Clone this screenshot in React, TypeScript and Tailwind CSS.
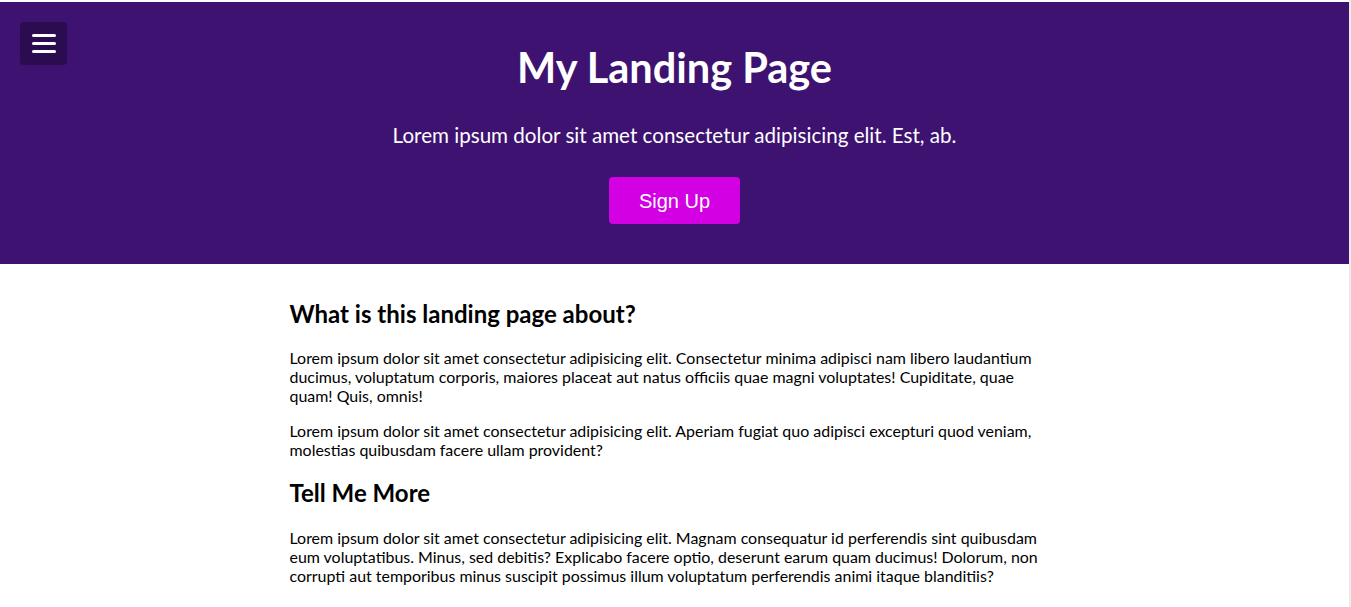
import React from "react";

export default function App() {
  return (
    <div className="flex h-[607px] w-full overflow-hidden bg-white" style={{ fontFamily: "Lato, 'Noto Sans', sans-serif" }}>
      <div className="flex-1 pt-[2px]">
        <header className="relative h-[262px] bg-[#3e1270] text-center text-white">
          <button className="absolute left-[20px] top-[20px] flex h-[43px] w-[47px] flex-col items-center justify-center gap-[5px] rounded-[4px] bg-[#2b0c50]">
            <span className="block h-[3px] w-[24px] rounded-full bg-white" />
            <span className="block h-[3px] w-[24px] rounded-full bg-white" />
            <span className="block h-[3px] w-[24px] rounded-full bg-white" />
          </button>
          <h1 className="pt-[40px] text-[41.5px] font-bold leading-[50px]">My Landing Page</h1>
          <p className="mt-[31px] text-[20.6px] leading-[24px]">
            Lorem ipsum dolor sit amet consectetur adipisicing elit. Est, ab.
          </p>
          <button
            className="mt-[30px] h-[47px] w-[131px] rounded-[4px] bg-[#d200e3] text-[20px] text-white"
            style={{ fontFamily: "'Liberation Sans', Arial, sans-serif" }}
          >
            Sign Up
          </button>
        </header>
        <main className="mx-auto w-[770px] pt-[35px] text-black">
          <h2 className="text-[24px] font-bold leading-[29px]">What is this landing page about?</h2>
          <p className="mt-[20px] text-[15.95px] leading-[19px]">
            Lorem ipsum dolor sit amet consectetur adipisicing elit. Consectetur minima adipisci nam libero laudantium ducimus, voluptatum corporis, maiores placeat aut natus officiis quae magni voluptates! Cupiditate, quae quam! Quis, omnis!
          </p>
          <p className="mt-[16px] text-[15.95px] leading-[19px]">
            Lorem ipsum dolor sit amet consectetur adipisicing elit. Aperiam fugiat quo adipisci excepturi quod veniam, molestias quibusdam facere ullam provident?
          </p>
          <h2 className="mt-[19px] text-[24px] font-bold leading-[29px]">Tell Me More</h2>
          <p className="mt-[21px] text-[15.95px] leading-[19px]">
            Lorem ipsum dolor sit amet consectetur adipisicing elit. Magnam consequatur id perferendis sint quibusdam eum voluptatibus. Minus, sed debitis? Explicabo facere optio, deserunt earum quam ducimus! Dolorum, non corrupti aut temporibus minus suscipit possimus illum voluptatum perferendis animi itaque blanditiis?
          </p>
        </main>
      </div>
      <div className="w-[2px] bg-[#ececec]" />
    </div>
  );
}
